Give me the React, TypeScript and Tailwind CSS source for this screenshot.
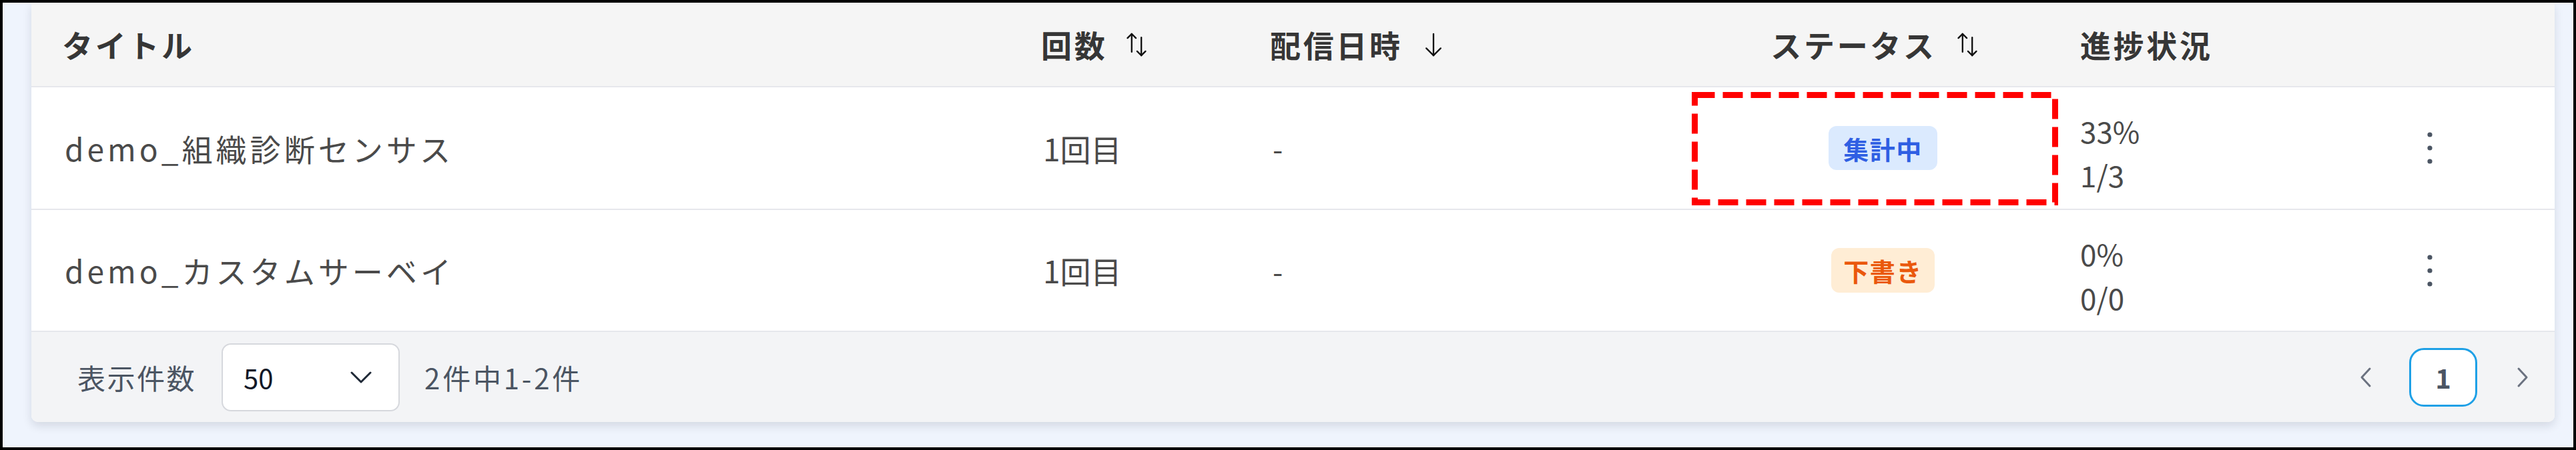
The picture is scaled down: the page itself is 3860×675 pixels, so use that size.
import React from 'react';

const COLS = 'grid grid-cols-[1461px_345px_682px_549px_476px_1fr]';

const SortIcon = () => (
  <svg width="36" height="40" viewBox="0 0 20 22" fill="none" stroke="#111" strokeWidth="1.3" strokeLinecap="round" strokeLinejoin="round">
    <path d="M6 2v15" />
    <path d="M2.5 5.5 6 2l3.5 3.5" />
    <path d="M14 5v15" />
    <path d="M10.5 16.5 14 20l3.5-3.5" />
  </svg>
);

const DownIcon = () => (
  <svg width="36" height="40" viewBox="0 0 20 22" fill="none" stroke="#111" strokeWidth="1.3" strokeLinecap="round" strokeLinejoin="round">
    <path d="M10 2v18" />
    <path d="M4 14l6 6 6-6" />
  </svg>
);

const Kebab = () => (
  <svg width="12" height="52" viewBox="0 0 12 52" fill="#4b5563">
    <circle cx="6" cy="6" r="3.6" />
    <circle cx="6" cy="26" r="3.6" />
    <circle cx="6" cy="46" r="3.6" />
  </svg>
);

const Chevron = ({ dir }: { dir: 'left' | 'right' }) => (
  <svg width="20" height="32" viewBox="0 0 20 32" fill="none" stroke="#6b7280" strokeWidth="3" strokeLinecap="round" strokeLinejoin="round">
    {dir === 'left' ? <path d="M16 3 4 16l12 13" /> : <path d="M4 3l12 13L4 29" />}
  </svg>
);

interface Survey {
  title: string;
  count: string;
  date: string;
  status: 'counting' | 'draft';
  percent: string;
  ratio: string;
}

const rows: Survey[] = [
  { title: 'demo_組織診断センサス', count: '1回目', date: '-', status: 'counting', percent: '33%', ratio: '1/3' },
  { title: 'demo_カスタムサーベイ', count: '1回目', date: '-', status: 'draft', percent: '0%', ratio: '0/0' },
];

const StatusBadge = ({ status }: { status: Survey['status'] }) =>
  status === 'counting' ? (
    <span className="inline-flex items-center h-[66px] px-[22px] rounded-[12px] bg-[#dbeafe] text-[#2f5fe3] text-[38px] font-bold tracking-[0.04em]">
      集計中
    </span>
  ) : (
    <span className="inline-flex items-center h-[67px] px-[18px] rounded-[12px] bg-[#ffedd5] text-[#ea580c] text-[38px] font-bold tracking-[0.04em]">
      下書き
    </span>
  );

export default function App() {
  return (
    <div
      className="w-[3860px] h-[675px] border-[4px] border-black bg-[#eff4fd] pl-[43px] pr-[28px] overflow-hidden"
      style={{ fontFamily: '"Noto Sans CJK JP", "Noto Sans", sans-serif' }}
    >
      <div className="bg-white rounded-b-[10px] shadow-[0_6px_14px_rgba(15,23,42,0.12)]">
        {/* header */}
        <div className={`${COLS} h-[127px] items-center bg-[#f5f5f5] border-b-2 border-[#e6e7ec] text-[46px] font-bold text-[#363636] tracking-[0.08em]`}>
          <div className="pl-[46px]">タイトル</div>
          <div className="pl-[52px] flex items-center gap-[26px]">
            回数
            <SortIcon />
          </div>
          <div className="pl-[50px] flex items-center gap-[28px]">
            配信日時
            <DownIcon />
          </div>
          <div className="flex items-center justify-center gap-[28px]">
            ステータス
            <SortIcon />
          </div>
          <div className="pl-[33px]">進捗状況</div>
          <div />
        </div>

        {/* rows */}
        {rows.map((row, i) => (
          <div
            key={row.title}
            className={`${COLS} ${i === 0 ? 'h-[184px]' : 'h-[183px]'} items-center border-b-2 border-[#e6e7ec] text-[#4a4a4a]`}
          >
            <div className="pl-[50px] text-[46px] tracking-[0.11em]">{row.title}</div>
            <div className="pl-[55px] text-[46px]">{row.count}</div>
            <div className="pl-[54px] text-[44px]">{row.date}</div>
            <div className="relative h-full flex items-center justify-center pl-[24px]">
              <StatusBadge status={row.status} />
              {i === 0 && (
                <svg className="absolute left-0 top-[7px] w-full h-[170px]" viewBox="0 0 549 170" preserveAspectRatio="none" fill="none">
                  <rect x="4.5" y="4.5" width="540" height="161" stroke="#ff0000" strokeWidth="9" strokeDasharray="30 12" />
                </svg>
              )}
            </div>
            <div className="pl-[33px] pt-[14px] text-[44px] leading-[66px] text-[#4a4a4a]">
              <div>{row.percent}</div>
              <div>{row.ratio}</div>
            </div>
            <div className="pl-[75px] flex items-center">
              <Kebab />
            </div>
          </div>
        ))}

        {/* footer */}
        <div className="h-[135px] bg-[#f3f4f6] rounded-b-[10px] flex items-center justify-between pl-[69px] pr-[38px]">
          <div className="flex items-center text-[42px] text-[#4b5563] tracking-[0.06em]">
            <span>表示件数</span>
            <div className="ml-[38px] w-[267px] h-[102px] bg-white border-2 border-[#d6d8dd] rounded-[14px] flex items-center justify-between pl-[31px] pr-[40px]">
              <span className="text-[40px] text-[#111827] tracking-normal">50</span>
              <svg width="32" height="18" viewBox="0 0 32 18" fill="none" stroke="#1f2937" strokeWidth="3" strokeLinecap="round" strokeLinejoin="round">
                <path d="M2 2l14 14L30 2" />
              </svg>
            </div>
            <span className="ml-[37px] tracking-[0.09em]">2件中1-2件</span>
          </div>
          <div className="flex items-center">
            <Chevron dir="left" />
            <div className="ml-[55px] w-[102px] h-[88px] rounded-[22px] border-[3px] border-[#1ea0e6] bg-white flex items-center justify-center text-[40px] font-bold text-[#4b5563]">
              1
            </div>
            <div className="ml-[58px]">
              <Chevron dir="right" />
            </div>
          </div>
        </div>
      </div>
    </div>
  );
}
